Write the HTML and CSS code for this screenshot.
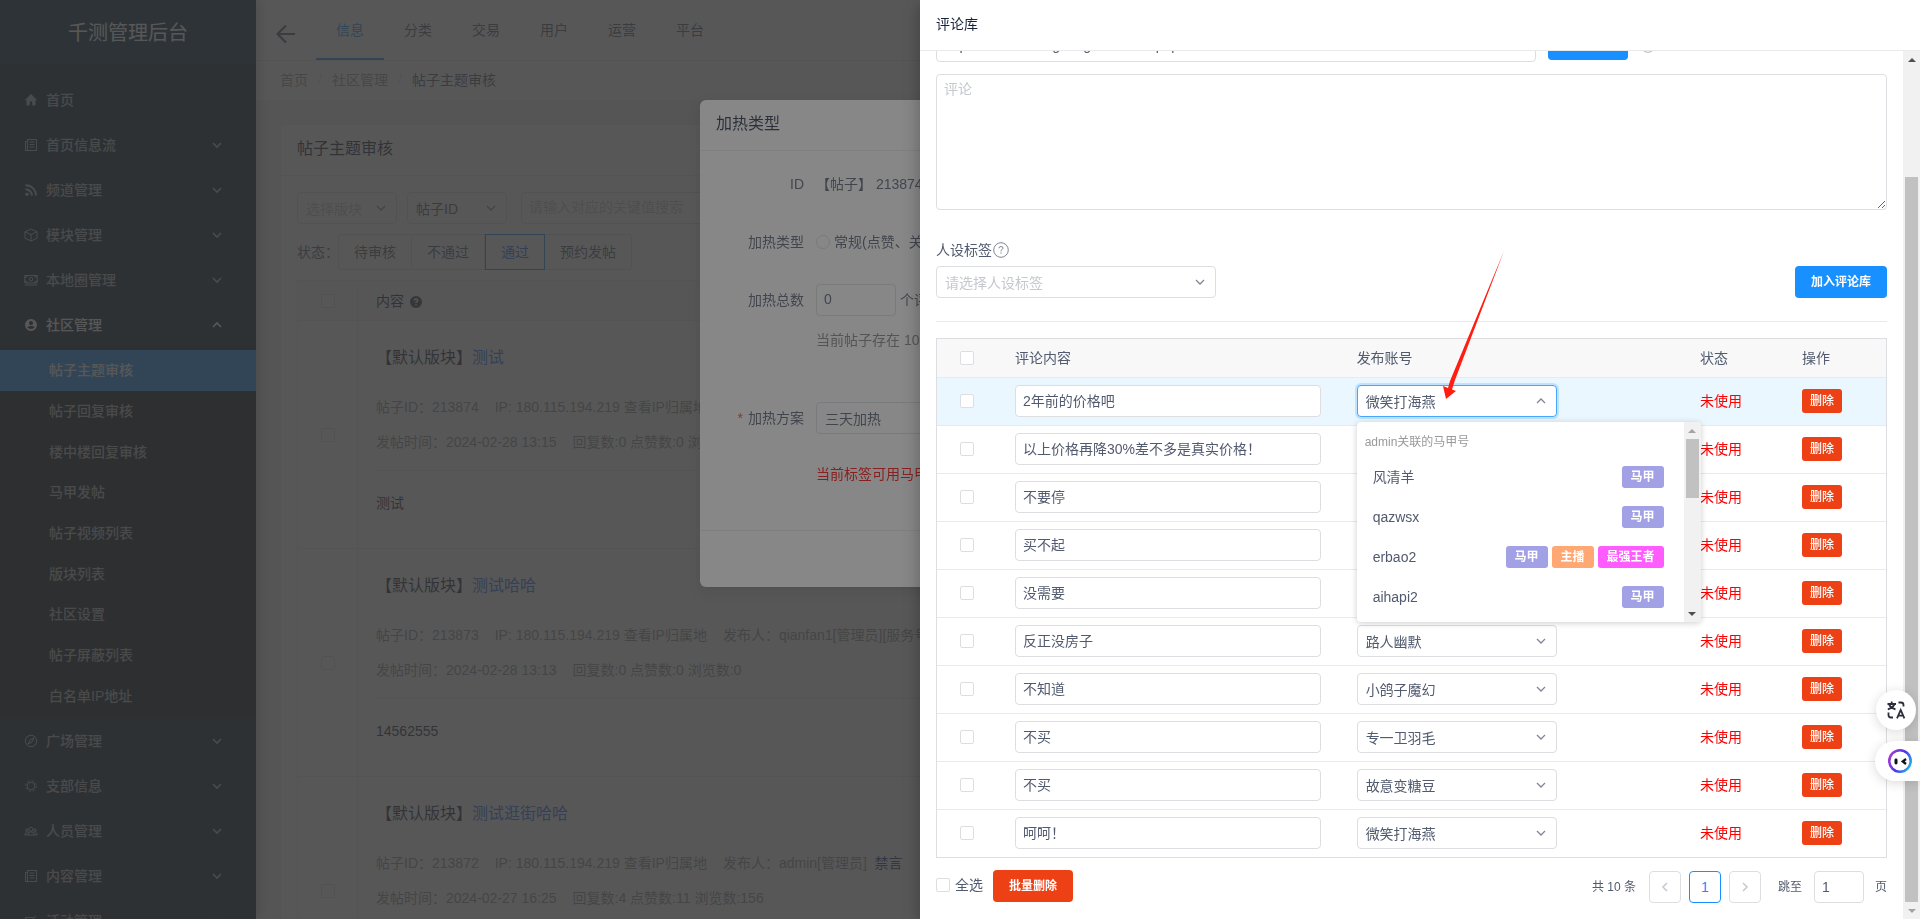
FILE: index.html
```html
<!DOCTYPE html>
<html lang="zh-CN">
<head>
<meta charset="utf-8">
<title>千测管理后台</title>
<link rel="stylesheet" href="styles.css">
</head>
<body>
<svg class="defs" aria-hidden="true">
  <symbol id="i-down" viewBox="0 0 14 14"><path d="M3 5l4 4 4-4"/></symbol>
  <symbol id="i-up" viewBox="0 0 14 14"><path d="M3 9l4-4 4 4"/></symbol>
  <symbol id="i-paper" viewBox="0 0 14 14"><path d="M3.500 1.500h9v11h-11v-9h2zM3.500 3.500v9M5.500 4h5M5.500 6.500h5M5.500 9h5"/></symbol>
  <symbol id="i-help" viewBox="0 0 16 16"><circle cx="8" cy="8" r="7.300"/><path d="M6 6.300Q6 4.500 8 4.500t2 1.600Q10 7 8 8.500v1M8 10.500v1.300"/></symbol>
</svg>

<div class="layout">
  <aside class="sider">
    <h1 class="logo">千测管理后台</h1>
    <nav class="menu">
      <a class="item" href="#"><svg class="ico fill" viewBox="0 0 14 14"><path d="M7 1L.8 7.200h1.700V12.500h3.300V8.500h2.400v4h3.300V7.200h1.700z"/></svg><span>首页</span></a>
      <a class="item" href="#"><svg class="ico"><use href="#i-paper"/></svg><span>首页信息流</span><svg class="arr"><use href="#i-down"/></svg></a>
      <a class="item" href="#"><svg class="ico" viewBox="0 0 14 14"><circle class="dot" cx="3" cy="11.200" r="1.700"/><path class="thick" d="M1.500 6.200a6.300 6.300 0 0 1 6.300 6.300M1.500 2.200A10.300 10.300 0 0 1 12 12.500"/></svg><span>频道管理</span><svg class="arr"><use href="#i-down"/></svg></a>
      <a class="item" href="#"><svg class="ico" viewBox="0 0 14 14"><path d="M7 1l6 2.800v6.400L7 13l-6-2.800V3.800zM1 3.800l6 2.800 6-2.800M7 6.600V13"/></svg><span>模块管理</span><svg class="arr"><use href="#i-down"/></svg></a>
      <a class="item" href="#"><svg class="ico" viewBox="0 0 14 14"><path d="M.8 2.500h12.400v7.500H.8zM1 12h12M3.500 2.500q0 2-2.700 2M10.500 2.500q0 2 2.700 2M3.500 10q0-2-2.700-2M10.500 10q0-2 2.700-2"/><circle cx="7" cy="6.200" r="1.800"/></svg><span>本地圈管理</span><svg class="arr"><use href="#i-down"/></svg></a>
      <a class="item open" href="#"><svg class="ico fill" viewBox="0 0 14 14"><path fill-rule="evenodd" d="M7 1a6 6 0 1 0 0 12A6 6 0 0 0 7 1zm0 2a2 2 0 1 1 0 4.200A2 2 0 0 1 7 3zM3.400 9.300c1.200-1.800 6-1.800 7.200 0-1.500 2.300-5.700 2.300-7.200 0z"/></svg><span>社区管理</span><svg class="arr"><use href="#i-up"/></svg></a>
      <div class="submenu">
        <a class="active" href="#">帖子主题审核</a>
        <a href="#">帖子回复审核</a>
        <a href="#">楼中楼回复审核</a>
        <a href="#">马甲发帖</a>
        <a href="#">帖子视频列表</a>
        <a href="#">版块列表</a>
        <a href="#">社区设置</a>
        <a href="#">帖子屏蔽列表</a>
        <a href="#">白名单IP地址</a>
      </div>
      <a class="item" href="#"><svg class="ico" viewBox="0 0 14 14"><circle cx="7" cy="7" r="5.700"/><path d="M10 4L8 8 4 10l2-4z"/></svg><span>广场管理</span><svg class="arr"><use href="#i-down"/></svg></a>
      <a class="item" href="#"><svg class="ico" viewBox="0 0 14 14"><circle cx="7" cy="7" r="3.800"/><circle cx="7" cy="7" r="5.300" stroke-dasharray="2.080 2.080"/></svg><span>支部信息</span><svg class="arr"><use href="#i-down"/></svg></a>
      <a class="item" href="#"><svg class="ico" viewBox="0 0 14 14"><circle cx="7" cy="5.300" r="2"/><circle cx="3" cy="6.300" r="1.300"/><circle cx="11" cy="6.300" r="1.300"/><path d="M4 11q0-3.200 3-3.200T10 11zM4 11H.8q0-2.500 2.700-2.500M10 11h3.200q0-2.500-2.700-2.500"/></svg><span>人员管理</span><svg class="arr"><use href="#i-down"/></svg></a>
      <a class="item" href="#"><svg class="ico"><use href="#i-paper"/></svg><span>内容管理</span><svg class="arr"><use href="#i-down"/></svg></a>
      <a class="item" href="#"><svg class="ico" viewBox="0 0 14 14"><path d="M1.500 3.500h8M1.500 3.500v9h10V6M6 8l6-6"/></svg><span>活动管理</span><svg class="arr"><use href="#i-down"/></svg></a>
    </nav>
  </aside>

  <div class="main">
    <header class="topbar">
      <button class="back" type="button" aria-label="返回"><svg viewBox="0 0 20 20"><path d="M19 10H2M10 1.500L1.500 10l8.500 8.500"/></svg></button>
      <nav class="tabs">
        <a class="on" href="#">信息</a><a href="#">分类</a><a href="#">交易</a><a href="#">用户</a><a href="#">运营</a><a href="#">平台</a>
      </nav>
    </header>
    <nav class="crumbs"><a href="#">首页</a><i>/</i><a href="#">社区管理</a><i>/</i><span>帖子主题审核</span></nav>
    <section class="card">
      <h2>帖子主题审核</h2>
      <div class="card-body">
        <div class="filters">
          <div class="sel w100 ph"><select aria-label="版块"><option>选择版块</option></select><svg><use href="#i-down"/></svg></div>
          <div class="sel w100"><select aria-label="搜索字段"><option>帖子ID</option></select><svg><use href="#i-down"/></svg></div>
          <input class="inp key" type="text" placeholder="请输入对应的关键值搜索" aria-label="关键值">
        </div>
        <div class="states">
          <span>状态：</span>
          <div class="group"><button type="button">待审核</button><button type="button">不通过</button><button type="button" class="on">通过</button><button type="button">预约发帖</button></div>
        </div>
        <table class="posts">
          <colgroup><col class="c-check"><col></colgroup>
          <thead><tr><th><input type="checkbox" aria-label="全选帖子"></th><th>内容 <svg class="q" viewBox="0 0 12 12"><circle cx="6" cy="6" r="6"/><path d="M4.300 4.700Q4.300 3 6 3t1.700 1.500Q7.700 5.300 6 6.300v.7M6 8.300v1.200"/></svg></th></tr></thead>
          <tbody>
            <tr><td><input type="checkbox" aria-label="选择帖子 213874"></td><td>
              <h3>【默认版块】<a href="#">测试</a></h3>
              <p class="meta"><span>帖子ID：213874</span><span>IP: 180.115.194.219 查看IP归属地</span><span>发布人：qianfan1[管理员][服务号]</span></p>
              <p class="meta second"><span>发帖时间：2024-02-28 13:15</span><span>回复数:0 点赞数:0 浏览数:0</span></p>
              <p class="text">测试</p></td></tr>
            <tr><td><input type="checkbox" aria-label="选择帖子 213873"></td><td>
              <h3>【默认版块】<a href="#">测试哈哈</a></h3>
              <p class="meta"><span>帖子ID：213873</span><span>IP: 180.115.194.219 查看IP归属地</span><span>发布人：qianfan1[管理员][服务号]</span></p>
              <p class="meta second"><span>发帖时间：2024-02-28 13:13</span><span>回复数:0 点赞数:0 浏览数:0</span></p>
              <p class="text">14562555</p></td></tr>
            <tr><td><input type="checkbox" aria-label="选择帖子 213872"></td><td>
              <h3>【默认版块】<a href="#">测试逛街哈哈</a></h3>
              <p class="meta"><span>帖子ID：213872</span><span>IP: 180.115.194.219 查看IP归属地</span><span>发布人：admin[管理员]&nbsp; <a class="ban" href="#">禁言</a></span></p>
              <p class="meta second"><span>发帖时间：2024-02-27 16:25</span><span>回复数:4 点赞数:11 浏览数:156</span></p>
              <p class="text">测试</p></td></tr>
          </tbody>
        </table>
      </div>
    </section>
  </div>
</div>

<div class="mask m1"></div>
<section class="modal" role="dialog" aria-label="加热类型">
  <h2>加热类型</h2>
  <div class="form">
    <div class="f"><span class="lab">ID</span><div class="val">【帖子】 213874</div></div>
    <div class="f"><span class="lab">加热类型</span><div class="val"><label class="radio"><input type="radio" name="heat">常规(点赞、关注)</label></div></div>
    <div class="f total"><label class="lab" for="total">加热总数</label><div class="val"><input class="inp num" id="total" type="text" value="0"> 个评论</div></div>
    <p class="hint">当前帖子存在 10 条评论</p>
    <div class="f plan"><label class="lab req" for="plan">加热方案</label><div class="val"><div class="sel w280"><select id="plan"><option>三天加热</option></select><svg><use href="#i-down"/></svg></div></div></div>
    <p class="hint red">当前标签可用马甲数</p>
  </div>
  <footer></footer>
</section>
<div class="mask m2"></div>

<section class="drawer" role="dialog" aria-label="评论库">
  <h2>评论库</h2>
  <div class="scroll">
    <div class="content">
      <div class="urlrow">
        <input class="inp" type="text" aria-label="链接" value="https://www.ceshiguangzhou.com/php">
        <button class="btn primary" type="button" aria-label="获取评论"></button>
        <svg class="help"><use href="#i-help"/></svg>
      </div>
      <textarea class="inp area" placeholder="评论" aria-label="评论"></textarea>
      <div class="tagrow">
        <div>
          <label for="tag">人设标签<svg class="help"><use href="#i-help"/></svg></label>
          <div class="sel w280 ph"><select id="tag"><option>请选择人设标签</option></select><svg><use href="#i-down"/></svg></div>
        </div>
        <button class="btn primary" type="button">加入评论库</button>
      </div>
      <hr>
      <table class="lib">
        <colgroup><col class="c-check"><col class="c-text"><col><col class="c-s"><col class="c-s"></colgroup>
        <thead><tr><th><input type="checkbox" aria-label="全选评论"></th><th>评论内容</th><th>发布账号</th><th>状态</th><th>操作</th></tr></thead>
        <tbody>
          <tr class="hover"><td><input type="checkbox" aria-label="选择"></td><td><input class="inp" type="text" aria-label="评论内容" value="2年前的价格吧"></td>
            <td><div class="sel w200 focus"><select aria-label="发布账号"><option>微笑打海燕</option></select><svg><use href="#i-up"/></svg>
              <div class="drop">
                <div class="list">
                  <div class="gt">admin关联的马甲号</div>
                  <ul>
                    <li><span>风清羊</span><b class="t1">马甲</b></li>
                    <li><span>qazwsx</span><b class="t1">马甲</b></li>
                    <li><span>erbao2</span><b class="t1">马甲</b><b class="t2">主播</b><b class="t3">最强王者</b></li>
                    <li><span>aihapi2</span><b class="t1">马甲</b></li>
                  </ul>
                </div>
                <div class="bar inner" aria-hidden="true"><i class="au off"></i><i class="thumb"></i><i class="ad"></i></div>
              </div></div></td>
            <td class="st">未使用</td><td><button class="btn del" type="button">删除</button></td></tr>
          <tr><td><input type="checkbox" aria-label="选择"></td><td><input class="inp" type="text" aria-label="评论内容" value="以上价格再降30%差不多是真实价格！"></td><td><div class="sel w200"><select aria-label="发布账号"><option>风清羊</option></select><svg><use href="#i-down"/></svg></div></td><td class="st">未使用</td><td><button class="btn del" type="button">删除</button></td></tr>
          <tr><td><input type="checkbox" aria-label="选择"></td><td><input class="inp" type="text" aria-label="评论内容" value="不要停"></td><td><div class="sel w200"><select aria-label="发布账号"><option>风清羊</option></select><svg><use href="#i-down"/></svg></div></td><td class="st">未使用</td><td><button class="btn del" type="button">删除</button></td></tr>
          <tr><td><input type="checkbox" aria-label="选择"></td><td><input class="inp" type="text" aria-label="评论内容" value="买不起"></td><td><div class="sel w200"><select aria-label="发布账号"><option>风清羊</option></select><svg><use href="#i-down"/></svg></div></td><td class="st">未使用</td><td><button class="btn del" type="button">删除</button></td></tr>
          <tr><td><input type="checkbox" aria-label="选择"></td><td><input class="inp" type="text" aria-label="评论内容" value="没需要"></td><td><div class="sel w200"><select aria-label="发布账号"><option>风清羊</option></select><svg><use href="#i-down"/></svg></div></td><td class="st">未使用</td><td><button class="btn del" type="button">删除</button></td></tr>
          <tr><td><input type="checkbox" aria-label="选择"></td><td><input class="inp" type="text" aria-label="评论内容" value="反正没房子"></td><td><div class="sel w200"><select aria-label="发布账号"><option>路人幽默</option></select><svg><use href="#i-down"/></svg></div></td><td class="st">未使用</td><td><button class="btn del" type="button">删除</button></td></tr>
          <tr><td><input type="checkbox" aria-label="选择"></td><td><input class="inp" type="text" aria-label="评论内容" value="不知道"></td><td><div class="sel w200"><select aria-label="发布账号"><option>小鸽子魔幻</option></select><svg><use href="#i-down"/></svg></div></td><td class="st">未使用</td><td><button class="btn del" type="button">删除</button></td></tr>
          <tr><td><input type="checkbox" aria-label="选择"></td><td><input class="inp" type="text" aria-label="评论内容" value="不买"></td><td><div class="sel w200"><select aria-label="发布账号"><option>专一卫羽毛</option></select><svg><use href="#i-down"/></svg></div></td><td class="st">未使用</td><td><button class="btn del" type="button">删除</button></td></tr>
          <tr><td><input type="checkbox" aria-label="选择"></td><td><input class="inp" type="text" aria-label="评论内容" value="不买"></td><td><div class="sel w200"><select aria-label="发布账号"><option>故意变糖豆</option></select><svg><use href="#i-down"/></svg></div></td><td class="st">未使用</td><td><button class="btn del" type="button">删除</button></td></tr>
          <tr><td><input type="checkbox" aria-label="选择"></td><td><input class="inp" type="text" aria-label="评论内容" value="呵呵！"></td><td><div class="sel w200"><select aria-label="发布账号"><option>微笑打海燕</option></select><svg><use href="#i-down"/></svg></div></td><td class="st">未使用</td><td><button class="btn del" type="button">删除</button></td></tr>
        </tbody>
      </table>
      <div class="foot">
        <label class="all"><input type="checkbox">全选</label>
        <button class="btn danger" type="button">批量删除</button>
        <div class="pager">
          <span class="sum">共 10 条</span>
          <button type="button" aria-label="上一页"><svg viewBox="0 0 14 14"><path d="M9 3L5 7l4 4"/></svg></button>
          <button type="button" class="on">1</button>
          <button type="button" aria-label="下一页"><svg viewBox="0 0 14 14"><path d="M5 3l4 4-4 4"/></svg></button>
          <label for="jump">跳至</label><input class="inp jump" id="jump" type="text" value="1"><span>页</span>
        </div>
      </div>
    </div>
    <div class="bar outer" aria-hidden="true"><i class="au"></i><i class="thumb"></i><i class="ad off"></i></div>
  </div>
</section>

<svg class="pointer" viewBox="0 0 64 152" aria-hidden="true"><path d="M63 1L14 130l-3 9.500 4 1.500L5 149 2 136l5 2 2-7z"/></svg>

<button class="float f1" type="button" aria-label="翻译"><svg viewBox="0 0 20 20"><path d="M1.500 4h8.500M5.700 1.500V4M3 4.200Q4.500 8 9.500 9.300M8.500 4.200Q7 8 1.800 9.300M12.500 2.500H15q2.500 0 2.500 2.500v1.500M2.500 12.500V15q0 2.500 2.500 2.500h2M11 18.300L14.700 10l3.700 8.300M12.200 15.700h5"/></svg></button>
<button class="float f2" type="button" aria-label="助手"><svg viewBox="0 0 24 24"><defs><linearGradient id="ring" x1="0" y1=".3" x2="1" y2=".8"><stop offset="0" stop-color="#a03ccf"/><stop offset=".5" stop-color="#4a35f0"/><stop offset="1" stop-color="#27b8e6"/></linearGradient></defs><circle cx="12" cy="12" r="10.700" fill="#fff" stroke="url(#ring)" stroke-width="2.600"/><rect x="6.500" y="9.500" width="3" height="6" rx="1.400" fill="#111"/><path d="M18 10l-3.300 2.500L18 15" fill="none" stroke="#111" stroke-width="2.200"/></svg></button>
</body>
</html>
```
FILE: styles.css
```css
* { box-sizing: border-box; }
html, body { height: 100%; margin: 0; }
body {
  overflow: hidden;
  font: 14px/20px "Liberation Sans", "Noto Sans CJK SC", sans-serif;
  color: #515a6e;
  background: #f0f2f5;
}
h1, h2, h3, p, ul { margin: 0; padding: 0; font-weight: 400; }
ul { list-style: none; }
a { color: inherit; text-decoration: none; }
i { font-style: normal; }
button, input, select, textarea { font: inherit; color: inherit; margin: 0; }
button { padding: 0; cursor: pointer; }
svg { fill: none; stroke: currentColor; flex: none; }
.defs { display: none; }

input[type="checkbox"], input[type="radio"] {
  appearance: none;
  display: block;
  width: 14px;
  height: 14px;
  border: 1px solid #dcdee2;
  border-radius: 2px;
  background: #fff;
}
input[type="radio"] { border-radius: 50%; }
th input[type="checkbox"], td input[type="checkbox"] { margin: 0 auto; }
.inp {
  height: 32px;
  padding: 0 7px 2px;
  border: 1px solid #dcdee2;
  border-radius: 4px;
  background: #fff;
  outline: 0;
}
.inp::placeholder { color: #c5c8ce; }
.sel { position: relative; height: 32px; }
.sel select {
  appearance: none;
  display: block;
  width: 100%;
  height: 32px;
  padding: 2px 24px 0 8px;
  border: 1px solid #dcdee2;
  border-radius: 4px;
  background: #fff;
  outline: 0;
}
.sel > svg {
  position: absolute;
  top: 9px;
  right: 9px;
  width: 14px;
  height: 14px;
  color: #808695;
  stroke-width: 1.3;
  pointer-events: none;
}
.ph select { color: #c5c8ce; }
.w100 { width: 100px; }
.w200 { width: 200px; }
.w280 { width: 280px; }
.focus select { border-color: #46a6ff; box-shadow: 0 0 0 2px rgba(24, 144, 255, .2); }

/* Page */
.layout { display: flex; height: 100%; overflow: hidden; }
.sider {
  position: relative;
  z-index: 1;
  flex: none;
  width: 256px;
  overflow: hidden;
  background: #001529;
  color: rgba(255, 255, 255, .66);
  box-shadow: 2px 0 12px rgba(0, 0, 0, .3);
}
.logo {
  height: 64px;
  background: #002138;
  color: #fff;
  font-size: 20px;
  line-height: 66px;
  text-align: center;
}
.menu { padding-top: 13px; font-weight: 500; }
.item { display: flex; align-items: center; gap: 8px; height: 45px; padding: 0 32px 0 24px; }
.item.open { color: #fff; }
.ico, .arr { width: 14px; height: 14px; }
.ico { stroke-width: 1; }
.ico.fill { fill: currentColor; stroke: none; }
.ico .dot { fill: currentColor; stroke: none; }
.ico .thick { stroke-width: 2; }
.arr { margin-left: auto; stroke-width: 1.600; }
.submenu { display: grid; grid-auto-rows: 1fr; height: 371px; padding: 3px 0 2px; background: #000c17; }
.submenu a { display: flex; align-items: center; padding-left: 49px; }
.submenu .active { background: #1890ff; color: #fff; }

.main { flex: 1; min-width: 0; }
.topbar { display: flex; height: 61px; padding-left: 20px; background: #fff; border-bottom: 1px solid #e8eaec; }
.back { width: 40px; border: 0; background: none; text-align: left; padding-top: 12px; }
.back svg { width: 20px; height: 20px; stroke-width: 2.200; }
.tabs { display: flex; }
.tabs a { height: 60px; padding: 0 20px; line-height: 60px; }
.tabs .on { color: #1890ff; border-bottom: 2px solid #1890ff; }
.crumbs { display: flex; gap: 9px; height: 39px; padding-left: 24px; background: #fff; line-height: 39px; color: #999; }
.crumbs i { width: 6px; text-align: center; color: #dcdee2; }
.crumbs span { color: #515a6e; }
.card { margin: 24px 24px 0; border: 1px solid #e8eaec; border-radius: 4px; background: #fff; }
.card h2 { height: 51px; padding: 0 16px; border-bottom: 1px solid #e8eaec; font-size: 16px; line-height: 48px; color: #17233d; }
.card-body { padding: 16px; }
.filters { display: flex; gap: 10px; }
.key { width: 300px; margin-left: 4px; }
.states { display: flex; align-items: center; margin: 10px 0; }
.states > span { width: 41px; white-space: nowrap; }
.group { display: flex; }
.group button { height: 36px; padding: 0 15px; border: 1px solid #dcdee2; border-left: 0; background: #fff; }
.group button:first-child { border-left: 1px solid #dcdee2; border-radius: 4px 0 0 4px; }
.group button:last-child { border-radius: 0 4px 4px 0; }
.group .on { border: 1px solid #1890ff; color: #2d6cff; }
.posts { width: 100%; table-layout: fixed; border-collapse: collapse; }
.posts th, .posts td { border: 1px solid #e8eaec; padding: 0 18px; text-align: left; font-weight: 400; }
.posts th { height: 40px; background: #f8f8f9; color: #17233d; }
.posts th:first-child, .posts td:first-child { padding: 0; }
.posts .q { width: 12px; height: 12px; margin-left: 2px; vertical-align: -2px; fill: #303848; stroke: none; }
.posts .q path { fill: none; stroke: #fff; stroke-width: 1.400; }
.posts td:last-child { padding: 18px 18px 34px; }
.posts h3 { margin-bottom: 13px; font-size: 16px; line-height: 38px; color: #17233d; }
.posts a { color: #2d6cff; }
.posts .ban { color: #17408c; }
.meta { display: flex; gap: 16px; line-height: 35px; color: #8c8f94; white-space: nowrap; }
.second { padding-bottom: 10px; border-bottom: 1px solid #e8eaec; }
.text { padding-top: 22px; line-height: 21px; color: #17233d; }
.c-check { width: 60px; }
.c-text { width: 36%; }
.c-s { width: 102px; }

/* Masks and modal */
.mask { position: fixed; inset: 0; background: rgba(55, 55, 55, .6); }
.m1 { z-index: 10; }
.modal {
  position: fixed;
  z-index: 11;
  top: 100px;
  left: calc(50% - 260px);
  width: 520px;
  border-radius: 6px;
  background: #fff;
  box-shadow: 0 4px 12px rgba(0, 0, 0, .15);
}
.m2 { z-index: 12; }
.modal h2 { height: 51px; padding: 0 16px; border-bottom: 1px solid #e8eaec; font-size: 16px; line-height: 48px; color: #17233d; }
.form { padding: 17px 16px 46px; white-space: nowrap; }
.f { display: flex; align-items: center; height: 32px; margin-bottom: 26px; }
.lab { width: 100px; padding-right: 12px; text-align: right; }
.val { display: flex; align-items: center; gap: 4px; }
.radio { display: flex; align-items: center; gap: 4px; }
.num { width: 80px; }
.f.total { margin-bottom: 14px; }
.hint { padding-left: 100px; color: #808080; }
.f.plan { margin: 52px 0 30px; }
.req::before { content: "*"; margin-right: 5px; color: #ed4014; }
.hint.red { color: #f00; }
.modal footer { height: 57px; border-top: 1px solid #e8eaec; }

/* Drawer */
.drawer {
  position: fixed;
  z-index: 20;
  top: 0;
  right: 0;
  bottom: 0;
  display: flex;
  flex-direction: column;
  width: 1000px;
  background: #fff;
  box-shadow: 0 4px 16px rgba(0, 0, 0, .3);
}
.drawer h2 { flex: none; height: 51px; padding: 0 16px; border-bottom: 1px solid #e8eaec; font-size: 14px; line-height: 48px; color: #17233d; }
.scroll { display: flex; flex: 1; min-height: 0; }
.content { flex: 1; min-width: 0; padding: 0 16px; }
.urlrow { display: flex; align-items: flex-end; gap: 12px; height: 11px; overflow: hidden; }
.urlrow .inp { width: 600px; flex: none; }
.urlrow .btn { width: 80px; flex: none; margin-bottom: 2px; }
.urlrow .help { margin-bottom: 9px; color: #b0b4bd; }
.area { display: block; width: 100%; height: 136px; margin-top: 12px; padding: 4px 7px; resize: vertical; }
.tagrow { display: flex; justify-content: space-between; align-items: flex-end; margin-top: 30px; }
.tagrow label { display: flex; align-items: center; gap: 1px; height: 20px; margin-bottom: 6px; }
.help { width: 16px; height: 16px; color: #808695; }
.btn { height: 32px; padding: 0 16px; border: 0; border-radius: 4px; color: #fff; font-size: 12px; font-weight: 700; }
.primary { background: #1890ff; }
.danger, .del { background: #ed4014; }
.del { display: block; height: 24px; padding: 0 8px; border-radius: 3px; font-weight: 500; }
.content hr { height: 1px; margin: 23px 0 16px; border: 0; background: #e8eaec; }
.lib { width: 100%; table-layout: fixed; border-collapse: separate; border-spacing: 0; border: 1px solid #dcdee2; border-bottom: 0; }
.lib th, .lib td { padding: 0 18px; border-bottom: 1px solid #e8eaec; text-align: left; }
.lib th { height: 39px; background: #f8f8f9; font-weight: 400; }
.lib td { height: 48px; padding-bottom: 1px; }
.lib tr:last-child td { border-bottom-color: #dcdee2; }
.lib th:first-child, .lib td:first-child { padding: 0 0 1px; }
.lib td .inp { display: block; width: 100%; }
.hover td { background: #ebf7ff; }
.st { color: #f00; }

.drop {
  position: absolute;
  z-index: 5;
  top: 37px;
  left: 0;
  display: flex;
  width: 344px;
  height: 200px;
  overflow: hidden;
  border-radius: 4px;
  background: #fff;
  box-shadow: 0 1px 6px rgba(0, 0, 0, .2);
}
.list { flex: 1; padding: 5px 0; }
.gt { padding-left: 8px; font-size: 12px; line-height: 30px; color: #999; }
.list li { display: flex; align-items: center; gap: 4px; height: 40px; padding: 0 20px 0 16px; }
.list li span { margin-right: auto; }
.list b { padding: 0 9px; border-radius: 3px; color: #fff; font-size: 12px; line-height: 22px; }
.t1 { background: #a3a1e6; }
.t2 { background: #ffa873; }
.t3 { background: #ff5cff; }

.bar { display: flex; flex: none; flex-direction: column; align-items: center; width: 17px; background: #f1f1f1; }
.thumb { width: 13px; background: #c1c1c1; }
.au, .ad { flex: none; width: 0; height: 0; margin: 7px 0 6px; border: 4px solid transparent; }
.au { border-top: 0; border-bottom-color: #505050; }
.ad { border-bottom: 0; border-top-color: #505050; }
.au.off { border-bottom-color: #a3a3a3; }
.ad.off { border-top-color: #a3a3a3; }
.inner .thumb { height: 59px; margin-bottom: auto; }
.outer .thumb { flex: 1; margin-top: 109px; }

.foot { display: flex; align-items: flex-start; margin-top: 12px; }
.all { display: flex; align-items: center; gap: 5px; height: 29px; margin-right: 10px; }
.pager { display: flex; align-items: center; gap: 8px; margin: 1px 0 0 auto; font-size: 12px; }
.pager button { width: 32px; height: 32px; border: 1px solid #dcdee2; border-radius: 4px; background: #fff; font-size: 14px; }
.pager button svg { display: block; width: 14px; height: 14px; margin: auto; color: #c5c8ce; stroke-width: 1.500; }
.pager .on { border-color: #1890ff; color: #1890ff; }
.sum { margin-right: 5px; }
.pager label { margin: 0 4px 0 9px; }
.jump { width: 50px; margin-right: 3px; padding-bottom: 0; font-size: 14px; }

/* Floating elements */
.pointer { position: fixed; z-index: 30; top: 250px; right: 415px; width: 64px; height: 152px; fill: #ff1e10; stroke: none; pointer-events: none; }
.float { position: fixed; z-index: 31; display: flex; align-items: center; justify-content: center; height: 40px; border: 0; background: #fff; box-shadow: 0 2px 12px rgba(0, 0, 0, .15); }
.f1 { top: 690px; right: 4px; width: 40px; border-radius: 50%; color: #2b2f3a; }
.f1 svg { width: 20px; height: 20px; stroke-width: 1.800; }
.f2 { top: 741px; right: 0; width: 45px; padding-left: 4px; border-radius: 20px 0 0 20px; }
.f2 svg { width: 24px; height: 24px; stroke: none; }
```
